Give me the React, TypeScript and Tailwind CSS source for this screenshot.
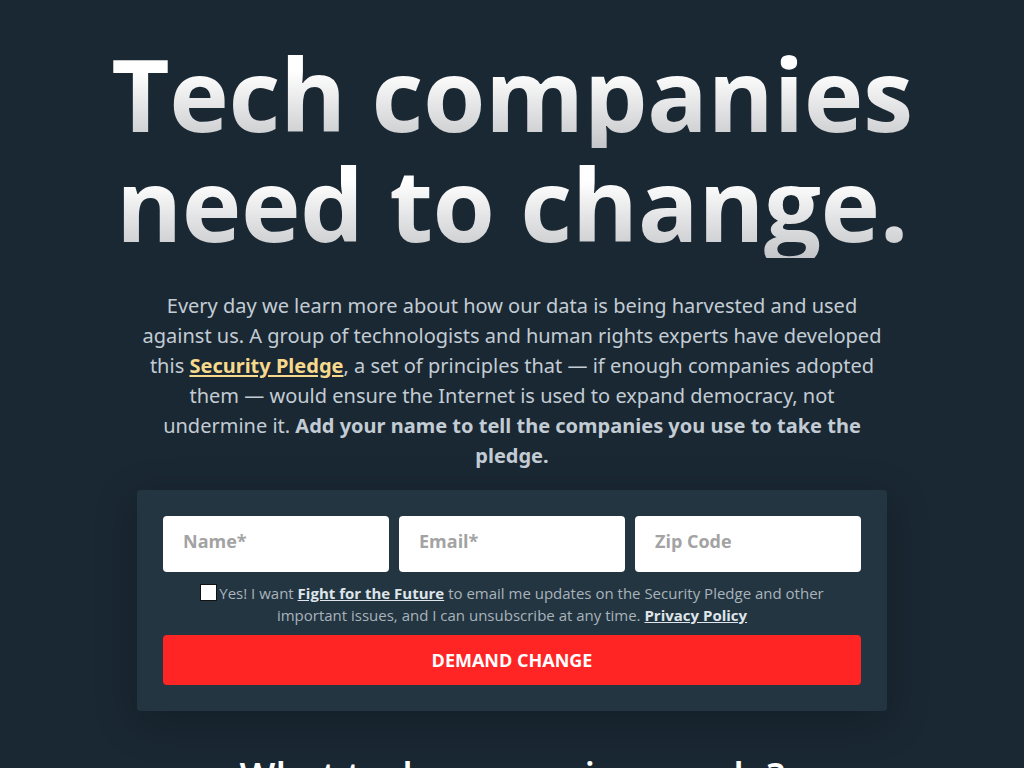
import React from "react";

const font = { fontFamily: '"Open Sans", "Noto Sans", sans-serif' };

const App = () => {
  return (
    <div className="min-h-screen bg-[#1a2833] overflow-hidden" style={font}>
      <main className="mx-auto flex max-w-[1024px] flex-col items-center pt-[38px]">
        {/* Headline */}
        <h1 className="text-center text-[101px] font-bold leading-[110px] tracking-[-0.5px]">
          <span className="block bg-gradient-to-b from-white from-30% to-[#c5c6c9] bg-clip-text text-transparent">
            Tech companies
          </span>
          <span className="block bg-gradient-to-b from-white from-30% to-[#c5c6c9] bg-clip-text text-transparent">
            need to change.
          </span>
        </h1>

        {/* Intro */}
        <p className="mt-[33px] w-[750px] text-center font-['Noto_Sans',sans-serif] text-[20px] leading-[30px] text-[#c3ccd4] [font-stretch:90%]">
          Every day we learn more about how our data is being harvested and used
          against us. A group of technologists and human rights experts have developed
          this{" "}
          <a href="#" className="font-bold text-[#f7d98e] underline underline-offset-2">
            Security Pledge
          </a>
          , a set of principles that — if enough companies adopted them — would ensure
          the Internet is used to expand democracy, not undermine it.{" "}
          <strong className="font-bold">
            Add your name to tell the companies you use to take the pledge.
          </strong>
        </p>

        {/* Form */}
        <form className="mt-[19px] w-[750px] rounded bg-[#233541] p-[26px] shadow-[0_10px_40px_rgba(0,0,0,0.25)]">
          <div className="grid grid-cols-3 gap-[10px]">
            {["Name*", "Email*", "Zip Code"].map(p => (
              <input
                key={p}
                placeholder={p}
                className="h-[56px] rounded bg-white px-[20px] pb-[6px] text-[18px] font-bold text-[#333] outline-none placeholder:text-[#a3a3a3]"
              />
            ))}
          </div>

          <label className="mx-auto mt-[10px] block w-[650px] text-center text-[15px] leading-[22px] text-[#a9b3bb]">
            <input
              type="checkbox"
              className="mr-[2px] inline-block h-[17px] w-[17px] translate-y-[2px] appearance-none border border-[#111] bg-white align-baseline"
            />
            Yes! I want{" "}
            <a href="#" className="font-bold text-[#dfe5ea] underline">
              Fight for the Future
            </a>{" "}
            to email me updates on the Security Pledge and other important issues, and I
            can unsubscribe at any time.{" "}
            <a href="#" className="font-bold text-[#dfe5ea] underline">
              Privacy Policy
            </a>
          </label>

          <button
            type="button"
            className="mt-[9px] h-[50px] w-full rounded bg-[#ff2525] text-[18px] font-bold uppercase text-white"
          >
            Demand Change
          </button>
        </form>

        {/* Next section */}
        <h2 className="mt-[41px] text-center text-[38px] font-semibold leading-[46px] text-white">
          What tech companies can do?
        </h2>
      </main>
    </div>
  );
};

export default App;
